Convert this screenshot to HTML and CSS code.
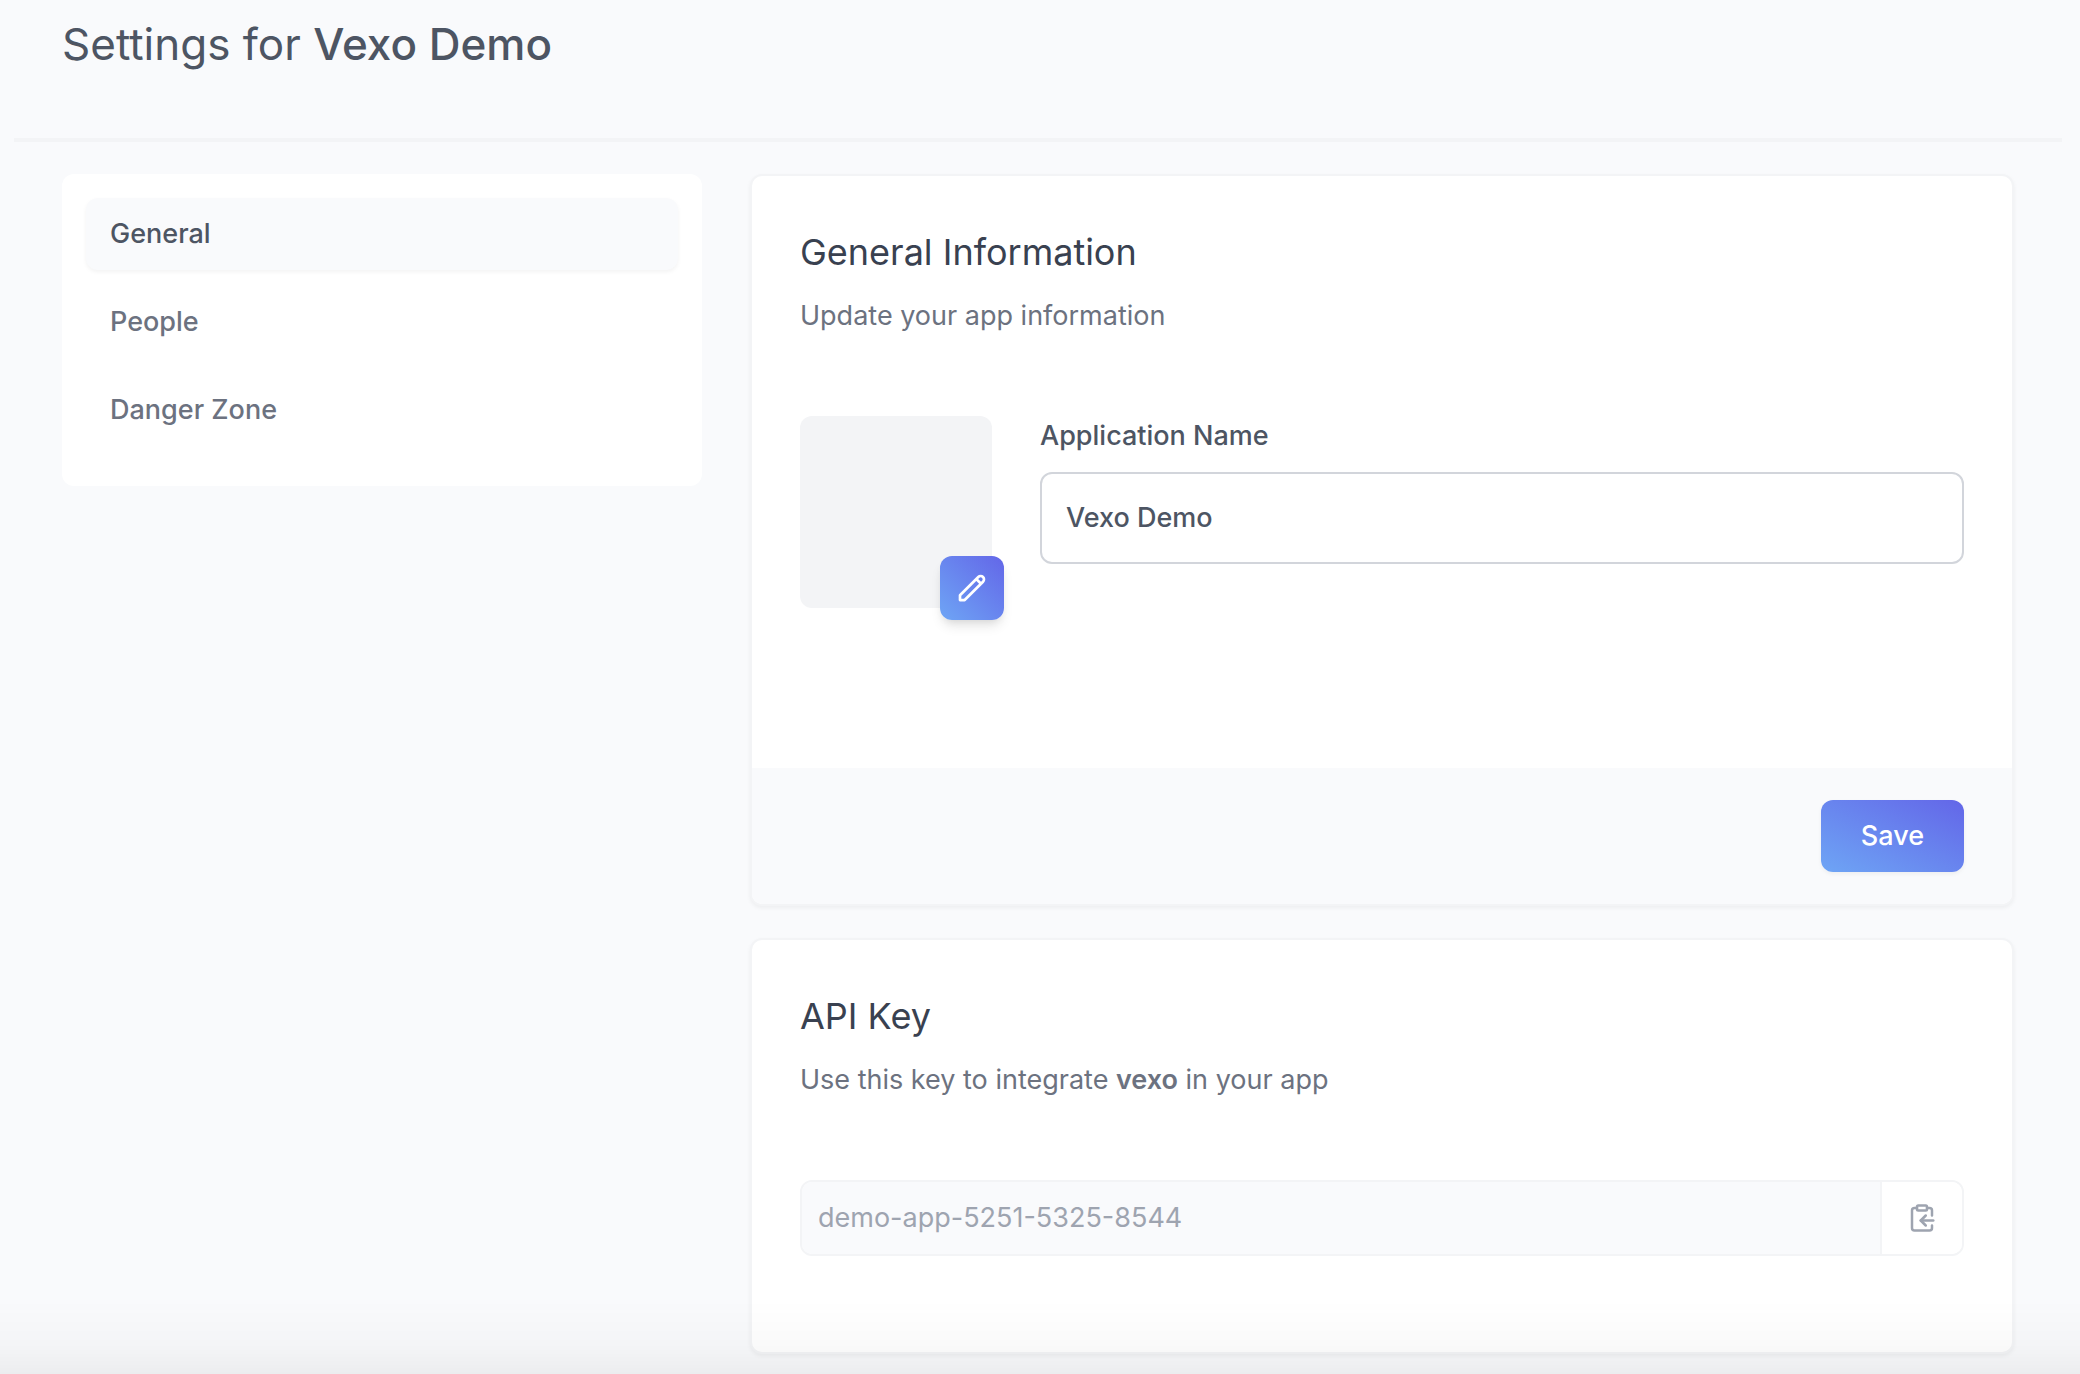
FILE: index.html
```html
<!DOCTYPE html>
<html lang="en">
<head>
  <meta charset="utf-8">
  <meta name="viewport" content="width=device-width, initial-scale=1">
  <title>Settings for Vexo Demo</title>
  <link rel="stylesheet" href="styles.css">
</head>
<body>
  <div class="page">
    <header class="page-header">
      <h1 class="page-title">Settings for <strong>Vexo Demo</strong></h1>
    </header>

    <div class="layout">
      <nav class="sidebar" aria-label="Settings sections">
        <a class="nav-item nav-item-active" href="#general" aria-current="page">General</a>
        <a class="nav-item" href="#people">People</a>
        <a class="nav-item" href="#danger">Danger Zone</a>
      </nav>

      <main class="content">
        <form class="card" id="general">
          <div class="card-body">
            <h2 class="card-title">General Information</h2>
            <p class="card-text">Update your app information</p>
            <div class="app-row">
              <div class="avatar">
                <button class="avatar-edit" type="button" aria-label="Change icon">
                  <svg class="icon-pencil" viewBox="0 0 24 24" fill="none" stroke="currentColor" stroke-width="2" stroke-linecap="round" stroke-linejoin="round" aria-hidden="true">
                    <path d="M15.232 5.232l3.536 3.536m-2.036-5.036a2.5 2.5 0 113.536 3.536L6.5 21.036H3v-3.572L16.732 3.732z"/>
                  </svg>
                </button>
              </div>
              <div class="field">
                <label class="field-label" for="app-name">Application Name</label>
                <input class="field-input" id="app-name" type="text" value="Vexo Demo">
              </div>
            </div>
          </div>
          <div class="card-footer">
            <button class="save-button" type="submit">Save</button>
          </div>
        </form>

        <section class="card">
          <div class="card-body card-body-key">
            <h2 class="card-title" id="key-title">API Key</h2>
            <p class="card-text">Use this key to integrate <strong>vexo</strong> in your app</p>
            <div class="key-row">
              <input class="key-input" type="text" value="demo-app-5251-5325-8544" aria-labelledby="key-title" readonly>
              <button class="key-copy" type="button" aria-label="Copy API key">
                <svg class="icon-copy" viewBox="0 0 24 24" fill="none" stroke="currentColor" stroke-width="2" stroke-linecap="round" stroke-linejoin="round" aria-hidden="true">
                  <rect x="8" y="2" width="8" height="4" rx="1"/>
                  <path d="M8 4H6a2 2 0 0 0-2 2v14a2 2 0 0 0 2 2h12a2 2 0 0 0 2-2v-2"/>
                  <path d="M16 4h2a2 2 0 0 1 2 2v4"/>
                  <path d="M21 14H11"/>
                  <path d="m15 10-4 4 4 4"/>
                </svg>
              </button>
            </div>
          </div>
        </section>
      </main>
    </div>
  </div>
  <div class="bottom-fade"></div>
</body>
</html>
```

FILE: styles.css
```css
*,
*::before,
*::after {
  box-sizing: border-box;
}

body {
  margin: 0;
  background: #f9fafc;
  color: #4d5563;
  font-family: Inter, "Liberation Sans", sans-serif;
  font-size: 27px;
  line-height: 40px;
}

h1,
h2,
p {
  margin: 0;
  font-weight: 400;
}

button,
input {
  margin: 0;
  font: inherit;
  color: inherit;
}

button {
  cursor: pointer;
}

.page {
  padding: 0 18px 20px 14px;
}

.page-header {
  padding: 12px 48px 62px;
  border-bottom: 4px solid #f3f4f6;
}

.page-title {
  font-size: 44px;
  line-height: 64px;
}

.page-title strong {
  font-weight: 500;
}

.layout {
  display: grid;
  grid-template-columns: 40fr 79fr;
  gap: 48px;
  align-items: start;
  padding: 32px 48px 0;
}

.sidebar {
  display: flex;
  flex-direction: column;
  gap: 16px;
  padding: 24px 24px 40px;
  border-radius: 12px;
  background: #fff;
}

.nav-item {
  padding: 16px 24px;
  border-radius: 12px;
  color: #6c7280;
  font-weight: 500;
  text-decoration: none;
}

.nav-item-active {
  background: #f9fafc;
  color: #4d5563;
  box-shadow: 0 2px 4px rgba(0, 0, 0, 0.05);
}

.content {
  display: flex;
  flex-direction: column;
  gap: 32px;
  min-width: 0;
}

.card {
  overflow: hidden;
  border: 2px solid #f3f4f6;
  border-radius: 12px;
  background: #fff;
  box-shadow: 0 2px 4px rgba(0, 0, 0, 0.05);
}

.card-body {
  padding: 48px 48px 160px;
}

.card-body-key {
  padding-bottom: 96px;
}

.card-title {
  color: #394150;
  font-size: 36px;
  line-height: 56px;
}

.card-text {
  margin-top: 16px;
  color: #6c7280;
}

.card-text strong {
  font-weight: 600;
}

.app-row {
  display: flex;
  gap: 48px;
  margin-top: 80px;
}

.avatar {
  position: relative;
  flex: none;
  width: 192px;
  height: 192px;
  border-radius: 12px;
  background: #f3f4f6;
}

.avatar-edit {
  position: absolute;
  right: -12px;
  bottom: -12px;
  display: flex;
  align-items: center;
  justify-content: center;
  width: 64px;
  height: 64px;
  padding: 0;
  border: 0;
  border-radius: 12px;
  background: linear-gradient(to top right, #6ea5f5, #6366e8);
  color: #fff;
  box-shadow: 0 8px 12px -2px rgba(0, 0, 0, 0.1), 0 4px 8px -4px rgba(0, 0, 0, 0.1);
}

.icon-pencil {
  width: 32px;
  height: 32px;
}

.field {
  display: flex;
  flex: 1;
  flex-direction: column;
  gap: 16px;
  min-width: 0;
}

.field-label {
  font-weight: 500;
}

.field-input {
  width: 100%;
  padding: 24px;
  border: 2px solid #d2d5db;
  border-radius: 12px;
  background: #fff;
  line-height: 40px;
  font-weight: 500;
}

.card-footer {
  display: flex;
  justify-content: flex-end;
  padding: 32px 48px;
  background: #f9fafc;
}

.save-button {
  padding: 16px 40px;
  border: 0;
  border-radius: 12px;
  background: linear-gradient(to top right, #6ea5f5, #6366e8);
  color: #fff;
  font-weight: 500;
  box-shadow: 0 2px 4px rgba(0, 0, 0, 0.05);
}

.key-row {
  display: flex;
  margin-top: 80px;
  overflow: hidden;
  border: 2px solid #f3f4f6;
  border-radius: 12px;
}

.key-input {
  flex: 1;
  min-width: 0;
  padding: 16px;
  border: 0;
  background: #f9fafc;
  color: #9ea4b0;
}

.key-copy {
  display: flex;
  flex: none;
  align-items: center;
  justify-content: center;
  width: 82px;
  padding: 0;
  border: 0;
  border-left: 2px solid #f3f4f6;
  background: #fff;
  color: #9ea4b0;
}

.icon-copy {
  width: 30px;
  height: 30px;
}

/* Soft shade along the lower edge of the window */
.bottom-fade {
  position: fixed;
  right: 0;
  bottom: 0;
  left: 0;
  height: 74px;
  background: linear-gradient(to top, rgba(0, 0, 0, 0.05), rgba(0, 0, 0, 0.02) 40%, transparent);
  pointer-events: none;
}
```
